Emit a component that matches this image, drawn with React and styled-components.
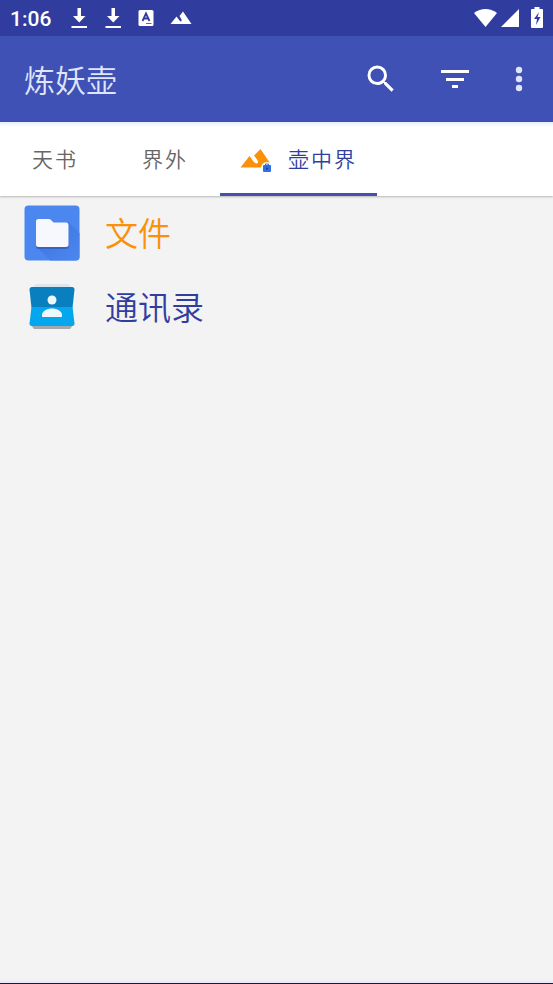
import React from "react";
import styled, { createGlobalStyle } from "styled-components";

const GlobalStyle = createGlobalStyle`
  * { box-sizing: border-box; }
  body {
    margin: 0;
    background: #f3f3f3;
    font-family: Roboto, "Noto Sans CJK SC", sans-serif;
  }
  button { font-family: inherit; border: 0; padding: 0; background: none; cursor: pointer; }
  svg { display: block; flex: none; }
`;

const Screen = styled.div`
  display: flex;
  flex-direction: column;
  min-height: 100vh;
  border-bottom: 1px solid #1c1833;
`;

const StatusBar = styled.div`
  display: flex;
  align-items: center;
  height: 36px;
  padding: 0 10px;
  background: #303d9f;
  color: #fff;
`;

const Clock = styled.time`
  padding-top: 2px;
  font-size: 21px;
  font-weight: 500;
  line-height: 34px;
  margin-right: 19px;
`;

const StatusGroup = styled.div`
  display: flex;
  align-items: center;
  gap: ${(p) => p.$gap};
  margin-left: ${(p) => (p.$end ? "auto" : "0")};
`;

const BatterySlot = styled.span`
  display: flex;
  padding-left: 12px;
`;

const AppBar = styled.header`
  display: flex;
  align-items: center;
  height: 86px;
  padding: 0 16px 0 24px;
  background: #3f51b5;
  color: #fff;
`;

const Title = styled.h1`
  flex: 1;
  margin: 0;
  font-family: "Noto Sans CJK SC", sans-serif;
  font-size: 31px;
  font-weight: 350;
  line-height: 40px;
  color: #dfe6fb;
`;

const Actions = styled.div`
  display: flex;
  align-items: center;
  gap: 38px;
`;

const IconButton = styled.button`
  display: flex;
  align-items: center;
  justify-content: center;
  width: 36px;
  height: 48px;
  color: ${(p) => (p.$narrow ? "#dfe6fb" : "#fff")};
  margin-left: ${(p) => (p.$narrow ? "-10px" : "0")};
`;

const Tabs = styled.nav`
  display: flex;
  height: 74px;
  background: linear-gradient(#e9eefb, #fff 5px);
  box-shadow: 0 1px 2px rgba(0, 0, 0, 0.25);
`;

const Tab = styled.button`
  display: flex;
  align-items: center;
  gap: 16px;
  padding: ${(p) => (p.$active ? "3px 20px 0 20px" : "3px 32px")};
  border-bottom: ${(p) => (p.$active ? "3px solid #4450ae" : "0")};
  color: ${(p) => (p.$active ? "#303f9f" : "#666")};
  font-size: 21px;
  font-weight: 350;
  line-height: 28px;
  white-space: nowrap;
`;

const TabLabel = styled.span`
  padding-top: 2px;
  letter-spacing: 2px;
`;

const List = styled.ul`
  flex: 1;
  margin: 0;
  padding: 0;
  list-style: none;
`;

const Row = styled.button`
  display: flex;
  align-items: center;
  width: 100%;
  height: 74px;
  padding: 0 24px;
  gap: 25px;
  color: ${(p) => p.$color};
  font-size: 33px;
  font-weight: 350;
  line-height: 44px;
  text-align: left;
`;

const RowLabel = styled.span`
  padding-top: 4px;
`;

const BottomEdge = styled.div`
  height: 4px;
  background: linear-gradient(#f3f3f3, #e6e8f8);
`;

const DownloadIcon = () => (
  <svg width="18" height="22" viewBox="0 0 18 22" fill="currentColor" aria-hidden="true">
    <path d="M7.500 1h3.500v8h4.500l-6.250 6.500L3 9h4.500zM1.500 19h15.500v2H1.500z" />
  </svg>
);

const LetterIcon = () => (
  <svg width="16" height="18" viewBox="0 0 16 18" aria-hidden="true">
    <rect x=".5" y="1" width="15" height="16" rx="1.500" fill="#fff" />
    <path d="M4.500 12 8 4.500l3.500 7.500M6 9.500h4" fill="none" stroke="#303d9f" strokeWidth="1.800" />
    <path d="M8 14.500h5.500" stroke="#303d9f" strokeWidth=".8" />
  </svg>
);

const PeaksIcon = () => (
  <svg width="22" height="14" viewBox="0 0 22 14" fill="#fff" aria-hidden="true">
    <path d="M.5 13 6.500 5.500l3 4q1.500 1.500 2 .5.5-.8-.5-2.500L9.500 5 13 .5 21.500 13z" />
  </svg>
);

const WifiIcon = () => (
  <svg width="24" height="20" viewBox="0 0 24 20" fill="#fff" aria-hidden="true">
    <path d="M1 5C8-.5 17-.5 24 5L12.500 19z" />
  </svg>
);

const SignalIcon = () => (
  <svg width="18" height="18" viewBox="0 0 18 18" fill="#fff" aria-hidden="true">
    <path d="M0 18 18 0v18z" />
  </svg>
);

const BatteryIcon = () => (
  <svg width="12" height="22" viewBox="0 0 12 22" aria-hidden="true">
    <path d="M3.500 0h5v2H11q1 0 1 1v17q0 1-1 1H1q-1 0-1-1V3q0-1 1-1h2.500z" fill="#fff" />
    <path d="M8 5 3 12h3l-1 6 4.500-8H6.500z" fill="#303d9f" />
  </svg>
);

const SearchIcon = () => (
  <svg width="36" height="36" viewBox="0 0 24 24" fill="currentColor" aria-hidden="true">
    <path d="M15.500 14h-.79l-.28-.27A6.470 6.470 0 0 0 16 9.500 6.500 6.500 0 1 0 9.500 16c1.610 0 3.090-.59 4.230-1.570l.27.28v.79l5 4.990L20.490 19l-4.990-5zm-6 0C7.010 14 5 11.990 5 9.500S7.010 5 9.500 5 14 7.010 14 9.500 11.990 14 9.500 14z" />
  </svg>
);

const FilterIcon = () => (
  <svg width="36" height="36" viewBox="0 0 36 36" fill="currentColor" aria-hidden="true">
    <path d="M4 9h28v3H4zM9 17h18v3H9zM15 24h6v3h-6z" />
  </svg>
);

const MoreIcon = () => (
  <svg width="8" height="28" viewBox="0 0 8 28" fill="currentColor" aria-hidden="true">
    <circle cx="4" cy="5" r="3.200" />
    <circle cx="4" cy="14" r="3.200" />
    <circle cx="4" cy="23" r="3.200" />
  </svg>
);

const WorkPeaksIcon = () => (
  <svg width="32" height="28" viewBox="0 0 32 28" aria-hidden="true">
    <path d="M.5 22.500 9.500 11l4 5.500q2.500 3 4 1.500 1.200-1.200-.5-3.500L14 10.500 20.500 4 30 18v4.500z" fill="#fb900b" />
    <circle cx="27" cy="23" r="6" fill="#fff" />
    <rect x="23" y="20" width="8" height="7" rx="1" fill="#2f6fe0" />
    <path d="M25.500 20.500v-1.500h3v1.500" fill="none" stroke="#2f6fe0" />
    <circle cx="27" cy="23.500" r="1.100" fill="#123fa8" />
  </svg>
);

const FilesIcon = () => (
  <svg width="56" height="56" viewBox="0 0 56 56" aria-hidden="true">
    <defs>
      <linearGradient id="folderShade" x1="0" y1="0" x2="1" y2="1">
        <stop offset="0" stopColor="#3b72d8" />
        <stop offset="1" stopColor="#4c87f0" />
      </linearGradient>
    </defs>
    <rect x=".5" y=".5" width="55" height="55" rx="4" fill="#4c87f0" />
    <path d="M13 42 44 17l11.500 11v24q0 3.500-3.500 3.500H26z" fill="url(#folderShade)" />
    <path d="M12 19h32.500v22.500q0 2.500-2.500 2.500H14.500q-2.500 0-2.500-2.500z" fill="#3264c4" />
    <path d="M12 16.500q0-2.500 2.500-2.500h10.500q1 0 2 1l2.500 2.500H42q2.500 0 2.500 2.500v19.500q0 2.500-2.500 2.500H14.500q-2.500 0-2.500-2.500z" fill="#f6f8fd" />
  </svg>
);

const ContactsIcon = () => (
  <svg width="56" height="56" viewBox="0 0 56 56" aria-hidden="true">
    <path d="M9 8.500 12 5h32l3 3.500z" fill="#dce6ec" />
    <path d="M7 46h42l-3 4H10z" fill="#a3a8aa" />
    <path d="M8 8h40q2.500 0 2.500 2.500L48.500 29h-41L5.500 10.500Q5.500 8 8 8z" fill="#0a7fbf" />
    <path d="M7.500 28h41l2 16.500q0 2.500-2.500 2.500H8q-2.500 0-2.500-2.500z" fill="#04a6ed" />
    <circle cx="28" cy="21" r="4.500" fill="#eef7fc" />
    <path d="M18 38v-2c0-4 5-6.500 10-6.500S38 32 38 36v2z" fill="#eef7fc" />
  </svg>
);

export default function App() {
  return (
    <>
      <GlobalStyle />
      <Screen>
        <StatusBar>
          <Clock>1:06</Clock>
          <StatusGroup $gap="16px">
            <DownloadIcon />
            <DownloadIcon />
            <LetterIcon />
            <PeaksIcon />
          </StatusGroup>
          <StatusGroup $gap="4px" $end>
            <WifiIcon />
            <SignalIcon />
          </StatusGroup>
          <BatterySlot>
            <BatteryIcon />
          </BatterySlot>
        </StatusBar>
        <AppBar>
          <Title>炼妖壶</Title>
          <Actions>
            <IconButton aria-label="搜索"><SearchIcon /></IconButton>
            <IconButton aria-label="筛选"><FilterIcon /></IconButton>
            <IconButton aria-label="更多" $narrow><MoreIcon /></IconButton>
          </Actions>
        </AppBar>
        <Tabs>
          <Tab><TabLabel>天书</TabLabel></Tab>
          <Tab><TabLabel>界外</TabLabel></Tab>
          <Tab $active aria-current="page"><WorkPeaksIcon /><TabLabel>壶中界</TabLabel></Tab>
        </Tabs>
        <List>
          <li><Row $color="#fb900b"><FilesIcon /><RowLabel>文件</RowLabel></Row></li>
          <li><Row $color="#303f9f"><ContactsIcon /><RowLabel>通讯录</RowLabel></Row></li>
        </List>
        <BottomEdge />
      </Screen>
    </>
  );
}
